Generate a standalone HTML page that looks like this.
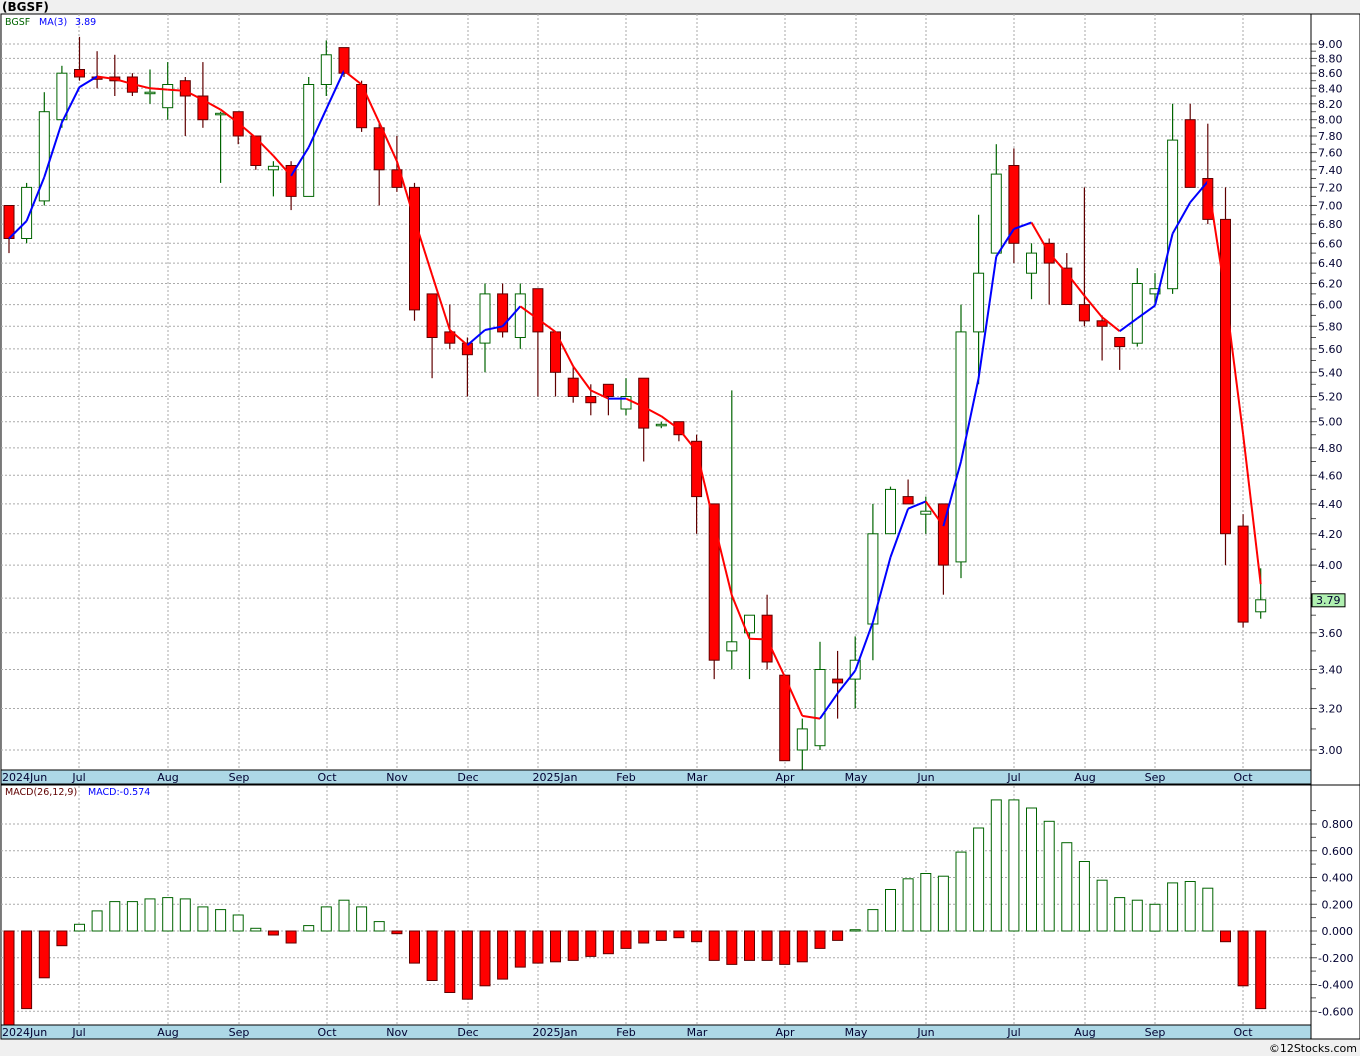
<!DOCTYPE html>
<html><head><meta charset="utf-8"><style>
html,body{margin:0;padding:0;background:#f0f0f0;}
svg{display:block;font-family:"DejaVu Sans","Liberation Sans",sans-serif;}
</style></head><body>
<svg id="s" width="1360" height="1056" xmlns="http://www.w3.org/2000/svg"></svg>
<script>
var s=document.getElementById('s'),out=[];
function py(p){return 44+642.6*Math.log(9/p);}
function my(v){return 931-133.75*v;}
function X(i){return 9+17.63*i;}
out.push('<rect x="0" y="0" width="1360" height="1056" fill="#f0f0f0"/>');
out.push('<text x="2" y="11" font-size="12" font-weight="bold" fill="#000">(BGSF)</text>');
out.push('<rect x="1" y="14" width="1359" height="1025" fill="#fff" stroke="#000" stroke-width="1"/>');
var months=[[9,'2024Jun'],[79,'Jul'],[168,'Aug'],[239,'Sep'],[327,'Oct'],[397,'Nov'],[468,'Dec'],[538,'2025Jan'],[626,'Feb'],[697,'Mar'],[785,'Apr'],[856,'May'],[926,'Jun'],[1014,'Jul'],[1085,'Aug'],[1155,'Sep'],[1243,'Oct']];
months.forEach(function(m){if(m[0]>9){out.push('<line x1="'+m[0]+'" y1="14" x2="'+m[0]+'" y2="1039" stroke="#aaa" stroke-dasharray="2,2"/>');}});
for(var k=0;k<=30;k++){var p=3+k*0.2;var y=py(p);
 out.push('<line x1="1" y1="'+y.toFixed(1)+'" x2="1311" y2="'+y.toFixed(1)+'" stroke="#aaa" stroke-dasharray="2,2"/>');
 out.push('<line x1="1311" y1="'+y.toFixed(1)+'" x2="1317" y2="'+y.toFixed(1)+'" stroke="#555"/>');
 out.push('<text x="1318" y="'+(y+4).toFixed(1)+'" font-size="11" fill="#000030">'+p.toFixed(2)+'</text>');
 var y2=py(p+0.1); if(p<9) out.push('<line x1="1311" y1="'+y2.toFixed(1)+'" x2="1316" y2="'+y2.toFixed(1)+'" stroke="#555"/>');}
for(var k=-3;k<=4;k++){var v=k*0.2;var y=my(v);
 out.push('<line x1="1" y1="'+y+'" x2="1311" y2="'+y+'" stroke="#aaa" stroke-dasharray="2,2"/>');
 out.push('<line x1="1311" y1="'+y+'" x2="1317" y2="'+y+'" stroke="#555"/>');
 out.push('<text x="1318" y="'+(y+4)+'" font-size="11" fill="#000030">'+(v<0?'-':'\u00a0')+Math.abs(v).toFixed(3)+'</text>');
 out.push('<line x1="1311" y1="'+(y-13.4)+'" x2="1316" y2="'+(y-13.4)+'" stroke="#555"/>');}
var d=[[7.0,7.0,6.5,6.65],[6.65,7.25,6.6,7.2],[7.05,8.35,7.0,8.1],[8.0,8.7,7.9,8.6],[8.65,9.1,8.5,8.55],[8.55,8.9,8.4,8.52],[8.55,8.85,8.3,8.5],[8.55,8.6,8.3,8.35],[8.35,8.65,8.2,8.35],[8.15,8.75,8.0,8.45],[8.5,8.55,7.8,8.3],[8.3,8.75,7.9,8.0],[8.07,8.1,7.25,8.08],[8.1,8.1,7.7,7.8],[7.8,7.8,7.4,7.45],[7.4,7.5,7.1,7.44],[7.45,7.5,6.95,7.1],[7.1,8.55,7.1,8.45],[8.45,9.05,8.3,8.85],[8.95,8.95,8.55,8.6],[8.45,8.5,7.85,7.9],[7.9,7.95,7.0,7.4],[7.4,7.8,7.15,7.2],[7.2,7.25,5.85,5.95],[6.1,6.1,5.35,5.7],[5.75,6.0,5.6,5.65],[5.65,5.7,5.2,5.55],[5.65,6.2,5.4,6.1],[6.1,6.2,5.7,5.75],[5.7,6.2,5.6,6.1],[6.15,6.15,5.2,5.75],[5.75,5.75,5.2,5.4],[5.35,5.45,5.15,5.2],[5.2,5.3,5.05,5.15],[5.3,5.3,5.05,5.2],[5.1,5.35,5.05,5.2],[5.35,5.35,4.7,4.95],[4.97,5.0,4.95,4.98],[5.0,5.0,4.85,4.9],[4.85,4.9,4.2,4.45],[4.4,4.4,3.35,3.45],[3.5,5.25,3.4,3.55],[3.6,3.7,3.35,3.7],[3.7,3.82,3.4,3.44],[3.37,3.37,2.95,2.95],[3.0,3.15,2.9,3.1],[3.02,3.55,3.0,3.4],[3.35,3.5,3.15,3.33],[3.35,3.58,3.2,3.45],[3.65,4.4,3.45,4.2],[4.2,4.52,4.2,4.5],[4.45,4.57,4.4,4.4],[4.33,4.45,4.2,4.35],[4.4,4.4,3.82,4.0],[4.02,6.0,3.92,5.75],[5.75,6.9,5.3,6.3],[6.5,7.7,6.5,7.35],[7.45,7.65,6.4,6.6],[6.3,6.6,6.05,6.5],[6.6,6.65,6.0,6.4],[6.35,6.5,6.0,6.0],[6.0,7.2,5.8,5.85],[5.85,5.9,5.5,5.8],[5.7,5.7,5.42,5.62],[5.65,6.35,5.62,6.2],[6.1,6.3,6.0,6.15],[6.15,8.2,6.1,7.75],[8.0,8.2,7.2,7.2],[7.3,7.95,6.8,6.85],[6.85,7.2,4.0,4.2],[4.25,4.33,3.63,3.66],[3.72,3.98,3.68,3.79]];
var ma=[];for(var i=0;i<d.length;i++){var a=d[Math.max(0,i-2)][3],b=d[Math.max(0,i-1)][3],c=d[i][3];ma.push((a+b+c)/3);}
d.forEach(function(c,i){var x=X(i),o=c[0],h=c[1],l=c[2],cl=c[3];var up=cl>=o;
 var wc=up?'#006400':'#600000';
 out.push('<line x1="'+x.toFixed(1)+'" y1="'+py(h).toFixed(1)+'" x2="'+x.toFixed(1)+'" y2="'+py(l).toFixed(1)+'" stroke="'+wc+'" stroke-width="1.2"/>');
 var t=py(Math.max(o,cl)),bt=py(Math.min(o,cl));var hh=Math.max(bt-t,1.5);
 out.push('<rect x="'+(x-5).toFixed(1)+'" y="'+t.toFixed(1)+'" width="10" height="'+hh.toFixed(1)+'" fill="'+(up?'#fff':'#ff0000')+'" stroke="'+wc+'" stroke-width="1"/>');});
for(var i=1;i<ma.length;i++){var col=ma[i]>=ma[i-1]?'#0000ff':'#ff0000';
 out.push('<line x1="'+X(i-1).toFixed(1)+'" y1="'+py(ma[i-1]).toFixed(1)+'" x2="'+X(i).toFixed(1)+'" y2="'+py(ma[i]).toFixed(1)+'" stroke="'+col+'" stroke-width="2"/>');}
var m=[-0.75,-0.58,-0.35,-0.11,0.05,0.15,0.22,0.22,0.24,0.25,0.24,0.18,0.16,0.12,0.02,-0.03,-0.09,0.04,0.18,0.23,0.18,0.07,-0.02,-0.24,-0.37,-0.46,-0.51,-0.41,-0.36,-0.27,-0.24,-0.23,-0.22,-0.19,-0.17,-0.13,-0.09,-0.07,-0.05,-0.08,-0.22,-0.25,-0.22,-0.22,-0.25,-0.23,-0.13,-0.07,0.01,0.16,0.31,0.39,0.43,0.41,0.59,0.77,0.98,0.98,0.92,0.82,0.66,0.52,0.38,0.25,0.23,0.2,0.36,0.37,0.32,-0.08,-0.41,-0.58];
m.forEach(function(v,i){var x=X(i);var y0=931,y1=Math.min(my(v),1025);var t=Math.min(y0,y1),h=Math.abs(y1-y0);
 out.push('<rect x="'+(x-5).toFixed(1)+'" y="'+t.toFixed(1)+'" width="10" height="'+Math.max(h,1).toFixed(1)+'" fill="'+(v>=0?'#fff':'#ff0000')+'" stroke="'+(v>=0?'#006400':'#600000')+'" stroke-width="1"/>');});
[770,1025].forEach(function(y){
 out.push('<rect x="1" y="'+y+'" width="1310" height="14" fill="#add8e6" stroke="#000" stroke-width="1"/>');
 months.forEach(function(mm){var lx=mm[0];var anchor='middle';if(mm[1]=='2024Jun'){lx=2;anchor='start';}else if(mm[1]=='2025Jan'){lx=555;}
  out.push('<text x="'+lx+'" y="'+(y+11)+'" font-size="11" text-anchor="'+anchor+'" fill="#000030">'+mm[1]+'</text>');});});
out.push('<line x1="1" y1="785" x2="1360" y2="785" stroke="#000"/>');
out.push('<line x1="1311" y1="14" x2="1311" y2="1039" stroke="#000"/>');
out.push('<text x="5" y="25" font-size="9.5" fill="#006400">BGSF</text><text x="39" y="25" font-size="9.5" fill="#0000ff">MA(3)</text><text x="75" y="25" font-size="9.5" fill="#0000ff">3.89</text>');
out.push('<text x="5" y="795" font-size="9.5" fill="#600000">MACD(26,12,9)</text><text x="88" y="795" font-size="9.5" fill="#0000ff">MACD:-0.574</text>');
var ly=py(3.79);
out.push('<rect x="1312" y="'+(ly-6).toFixed(1)+'" width="33" height="13" fill="#b0f0b0" stroke="#000"/>');
out.push('<text x="1316" y="'+(ly+4).toFixed(1)+'" font-size="11" fill="#000030">3.79</text>');
out.push('<rect x="0" y="1040" width="1360" height="16" fill="#f0f0f0"/>');
out.push('<text x="1357" y="1052" font-size="11" text-anchor="end" fill="#000">\u00a912Stocks.com</text>');
s.innerHTML=out.join('');
</script>
</body></html>
